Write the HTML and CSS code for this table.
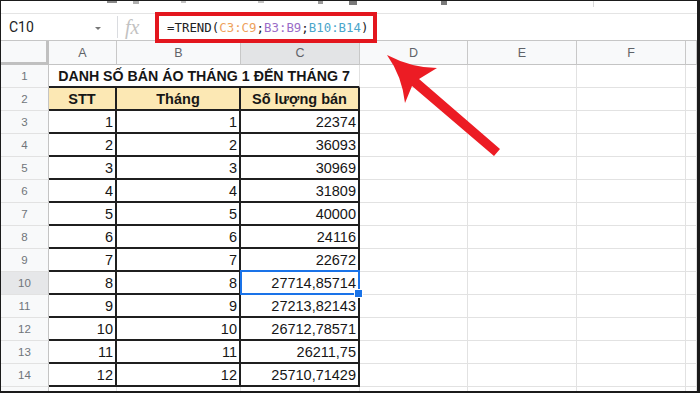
FILE: index.html
```html
<!DOCTYPE html>
<html lang="vi">
<head>
<meta charset="utf-8">
<title>TREND</title>
<link rel="stylesheet" href="styles.css">
</head>
<body>
<div class="frame">
  <div class="toolbar">
    <span class="tk tk1"></span><span class="tk tk2"></span><span class="tk tk3"></span><span class="tk tk4"></span><span class="tk tk5"></span><span class="tk tk6"></span><span class="tk tk7"></span><span class="tk tk8"></span>
  </div>
  <div class="fbar">
    <div class="namebox"><span>C10</span><span class="caret"></span></div>
    <div class="sep"></div>
    <div class="fx">fx</div>
    <div class="formula">=TREND(<span class="r1">C3:C9</span>;<span class="r2">B3:B9</span>;<span class="r3">B10:B14</span>)</div>
  </div>
  <div class="sheet">
    <div class="c ch corner"></div><div class="c ch">A</div><div class="c ch">B</div><div class="c ch on">C</div><div class="c ch">D</div><div class="c ch">E</div><div class="c ch">F</div><div class="c ch"></div>

    <div class="c rh">1</div><div class="c title">DANH SỐ BÁN ÁO THÁNG 1 ĐẾN THÁNG 7</div><div class="c"></div><div class="c"></div><div class="c"></div><div class="c"></div>

    <div class="c rh">2</div><div class="c t th">STT</div><div class="c t th">Tháng</div><div class="c t th">Số lượng bán</div><div class="c"></div><div class="c"></div><div class="c"></div><div class="c"></div>

    <div class="c rh">3</div><div class="c t">1</div><div class="c t">1</div><div class="c t">22374</div><div class="c"></div><div class="c"></div><div class="c"></div><div class="c"></div>
    <div class="c rh">4</div><div class="c t">2</div><div class="c t">2</div><div class="c t">36093</div><div class="c"></div><div class="c"></div><div class="c"></div><div class="c"></div>
    <div class="c rh">5</div><div class="c t">3</div><div class="c t">3</div><div class="c t">30969</div><div class="c"></div><div class="c"></div><div class="c"></div><div class="c"></div>
    <div class="c rh">6</div><div class="c t">4</div><div class="c t">4</div><div class="c t">31809</div><div class="c"></div><div class="c"></div><div class="c"></div><div class="c"></div>
    <div class="c rh">7</div><div class="c t">5</div><div class="c t">5</div><div class="c t">40000</div><div class="c"></div><div class="c"></div><div class="c"></div><div class="c"></div>
    <div class="c rh">8</div><div class="c t">6</div><div class="c t">6</div><div class="c t">24116</div><div class="c"></div><div class="c"></div><div class="c"></div><div class="c"></div>
    <div class="c rh">9</div><div class="c t">7</div><div class="c t">7</div><div class="c t">22672</div><div class="c"></div><div class="c"></div><div class="c"></div><div class="c"></div>
    <div class="c rh on">10</div><div class="c t">8</div><div class="c t">8</div><div class="c t sel">27714,85714</div><div class="c"></div><div class="c"></div><div class="c"></div><div class="c"></div>
    <div class="c rh">11</div><div class="c t">9</div><div class="c t">9</div><div class="c t">27213,82143</div><div class="c"></div><div class="c"></div><div class="c"></div><div class="c"></div>
    <div class="c rh">12</div><div class="c t">10</div><div class="c t">10</div><div class="c t">26712,78571</div><div class="c"></div><div class="c"></div><div class="c"></div><div class="c"></div>
    <div class="c rh">13</div><div class="c t">11</div><div class="c t">11</div><div class="c t">26211,75</div><div class="c"></div><div class="c"></div><div class="c"></div><div class="c"></div>
    <div class="c rh">14</div><div class="c t">12</div><div class="c t">12</div><div class="c t">25710,71429</div><div class="c"></div><div class="c"></div><div class="c"></div><div class="c"></div>
    <div class="c rh"></div><div class="c"></div><div class="c"></div><div class="c"></div><div class="c"></div><div class="c"></div><div class="c"></div><div class="c"></div>
  </div>

  <div class="callout"></div>
  <svg class="arrow" width="700" height="393" viewBox="0 0 700 393" aria-hidden="true">
    <path d="M387 55 Q412 68 437 68 L419 79 L500 149 L494 156 L412 86 L405 103 Q402 76 387 55 Z" fill="#ec1c24"/>
  </svg>
</div>
</body>
</html>
```

FILE: styles.css
```css
* {
  box-sizing: border-box;
  margin: 0;
  padding: 0;
}

body {
  margin: 0;
  background: #fff;
  font-family: "Liberation Sans", Arial, sans-serif;
}

.frame {
  position: relative;
  width: 700px;
  height: 393px;
  overflow: hidden;
  border-style: solid;
  border-color: #1b1b1b;
  border-width: 1px 3px 2px 1px;
  background: #fff;
  display: flex;
  flex-direction: column;
}

/* cut-off toolbar */
.toolbar {
  flex: none;
  height: 13px;
  border-bottom: 1px solid #e4e4e4;
  display: flex;
  align-items: flex-start;
}

.tk {
  display: block;
  height: 2px;
  background: #8a8a8a;
}
.tk1 { margin-left: 106px; width: 10px; }
.tk2 { margin-left: 16px; width: 6px; height: 3px; background: #b0b0b0; }
.tk3 { margin-left: 42px; width: 5px; background: #c4c4c4; }
.tk4 { margin-left: 72px; width: 6px; background: #c4c4c4; }
.tk5 { margin-left: 54px; width: 5px; height: 3px; background: #9a9a9a; }
.tk6 { margin-left: 26px; width: 8px; height: 4px; background: #7a7a7a; }
.tk7 { margin-left: 84px; width: 6px; height: 4px; background: #7a7a7a; }
.tk8 { margin-left: 146px; width: 1px; height: 6px; background: #d8d8d8; }

/* formula bar */
.fbar {
  flex: none;
  height: 27px;
  border-bottom: 1px solid #c6c6c6;
  display: flex;
  align-items: center;
}

.namebox {
  width: 116px;
  height: 100%;
  display: flex;
  align-items: center;
  padding-left: 8px;
  padding-right: 16px;
  font-family: Roboto, "Liberation Sans", sans-serif;
  font-size: 14px;
  color: #202124;
}

.caret {
  margin-left: auto;
  width: 0;
  height: 0;
  border-left: 3px solid transparent;
  border-right: 3px solid transparent;
  border-top: 3px solid #777;
  margin-top: 2px;
}

.sep {
  width: 1px;
  height: 22px;
  background: #dadce0;
}

.fx {
  width: 36px;
  padding-left: 7px;
  font-family: "Liberation Serif", serif;
  font-style: italic;
  font-size: 20px;
  color: #c2c2c2;
  line-height: 1;
}

.formula {
  padding-left: 13px;
  font-family: "DejaVu Sans Mono", "Liberation Mono", monospace;
  font-size: 12.4px;
  color: #202124;
  white-space: nowrap;
}

.r1 { color: #eea25c; }
.r2 { color: #9a6cc8; }
.r3 { color: #4aa6cb; }

/* sheet grid */
.sheet {
  flex: 1;
  display: grid;
  grid-template-columns: 48px 68px 124px 119px 108px 109px 109px 1fr;
  grid-template-rows: 24px;
  grid-auto-rows: 23px;
}

.c {
  border-right: 1px solid #e2e2e2;
  border-bottom: 1px solid #e2e2e2;
  display: flex;
  align-items: center;
  font-size: 14.5px;
  color: #161616;
  white-space: nowrap;
  overflow: hidden;
}

.ch {
  background: #f8f9fa;
  border-right-color: #c8c8c8;
  border-bottom-color: #c4c4c4;
  justify-content: center;
  font-size: 12.5px;
  color: #5f6368;
}

.ch.on {
  background: #e3e4e6;
}

.corner {
  border-right: 3px solid #c0c0c0;
  border-bottom: 3px solid #c0c0c0;
}

.rh {
  background: #f8f9fa;
  border-right-color: #c4c4c4;
  justify-content: center;
  font-size: 11.5px;
  color: #70757a;
}

.rh.on {
  background: #e6e7e9;
}

.title {
  grid-column: span 3;
  justify-content: center;
  font-weight: bold;
  font-size: 14.2px;
  border-bottom: 2px solid #1f1f1f;
}

.t {
  border-right: 2px solid #1f1f1f;
  border-bottom: 2px solid #1f1f1f;
  justify-content: flex-end;
  padding-right: 2px;
}

.th {
  background: #fce8b4;
  justify-content: center;
  font-weight: bold;
  padding-right: 0;
}

.sel {
  position: relative;
  overflow: visible;
}

.sel::before {
  content: "";
  position: absolute;
  left: -1px;
  top: -2px;
  right: -2px;
  bottom: -2px;
  border: 2px solid #1a73e8;
}

.sel::after {
  content: "";
  position: absolute;
  width: 7px;
  height: 7px;
  right: -5px;
  bottom: -5px;
  background: #1a73e8;
  border: 1px solid #fff;
}

/* annotations */
.callout {
  position: absolute;
  left: 154px;
  top: 11px;
  width: 222px;
  height: 31px;
  border: 4px solid #e3161e;
}

.arrow {
  position: absolute;
  left: -1px;
  top: -1px;
  pointer-events: none;
}
```
